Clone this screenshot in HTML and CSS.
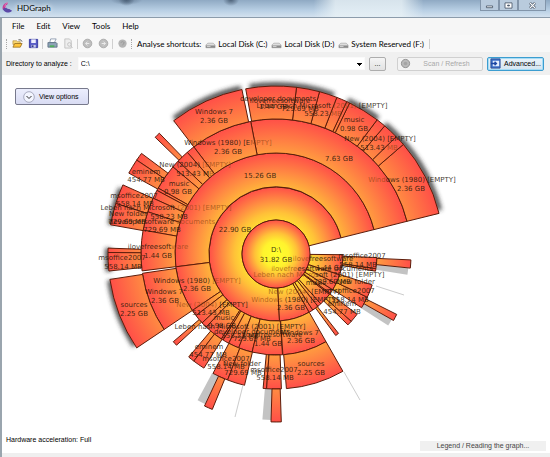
FILE: index.html
```html
<!DOCTYPE html>
<html lang="en">
<head>
<meta charset="utf-8">
<title>HDGraph</title>
<link rel="stylesheet" href="styles.css">
</head>
<body>
<div class="window">
  <header class="titlebar">
    <svg class="logo" viewBox="0 0 12 12" aria-hidden="true">
      <path d="M6 0A6 6 0 0 0 1 8L5 7A3 3 0 0 1 6 2Z" fill="#c43a94"/>
      <path d="M1 7a6 6 0 0 0 10 2L8 7A4 4 0 0 1 4 5Z" fill="#5b49a8"/>
      <path d="M6 0a4 4 0 0 0-2 6" stroke="#e584bd" fill="none"/>
    </svg>
    <h1 class="title">HDGraph</h1>
    <div class="controls">
      <button class="control" aria-label="Minimize"><svg viewBox="0 0 10 8"><path d="M1.500 4.500h7v2h-7z" fill="#fff" stroke="#4d5a6b"/></svg></button>
      <button class="control" aria-label="Maximize"><svg viewBox="0 0 10 8"><path d="M1 1h8v6H1z" fill="#fff" stroke="#4d5a6b"/><path d="M4 3.500h2v1H4z" fill="#4d5a6b" stroke="#4d5a6b"/></svg></button>
      <button class="control close" aria-label="Close"><svg viewBox="0 0 10 8"><path d="M2 1l6 6M8 1L2 7" stroke="#4d5a6b" stroke-width="3"/><path d="M2 1l6 6M8 1L2 7" stroke="#fff" stroke-width="1.400"/></svg></button>
    </div>
  </header>
  <div class="client">
    <nav class="menu">
      <a href="#">File</a><a href="#">Edit</a><a href="#">View</a><a href="#">Tools</a><a href="#">Help</a>
    </nav>
    <div class="toolbar">
      <span class="grip"></span>
      <button class="tool" aria-label="Open"><svg viewBox="0 0 12 12"><path d="M1 3h4l1 1h3v3H1z" fill="#f7d774" stroke="#a87b22" stroke-width=".6"/><path d="M1 10l2-4h8l-2 4z" fill="#ffc53a" stroke="#8d6418" stroke-width=".8"/><path d="M7 2q3-1 4 2" stroke="#555" fill="none"/></svg></button>
      <button class="tool" aria-label="Save"><svg viewBox="0 0 12 12"><path d="M1.500 1.500h9v9h-9z" fill="#5558c5" stroke="#3539a0"/><path d="M3.500 1.500h5v4h-5z" fill="#eef"/><path d="M3.500 7.500h5v3h-5z" fill="#c8cbea"/><path d="M4 8h2v2H4z" fill="#33388a"/></svg></button>
      <span class="sep"></span>
      <button class="tool" aria-label="Print"><svg viewBox="0 0 12 12"><path d="M4 1h6L8 5H3z" fill="#fff" stroke="#7688a0" stroke-width=".8"/><path d="M1 5h9l1 1v4H1z" fill="#8fa3b8" stroke="#526579" stroke-width=".8"/><path d="M3 8h5v2H3z" fill="#4fae5a"/></svg></button>
      <button class="tool" aria-label="Preview"><svg viewBox="0 0 12 12" fill="none" stroke="#c2c2c2"><path d="M2 1h5l2 2v8H2z" fill="#eee"/><circle cx="7" cy="7" r="2"/><path d="M8.500 8.500l2 2"/></svg></button>
      <span class="sep"></span>
      <button class="tool" aria-label="Back"><svg viewBox="0 0 12 12"><circle cx="6" cy="6" r="4.700" fill="#bebebe" stroke="#a9a9a9"/><path d="M8 6H4M6 4L4 6l2 2" stroke="#eee" fill="none"/></svg></button>
      <button class="tool" aria-label="Forward"><svg viewBox="0 0 12 12"><circle cx="6" cy="6" r="4.700" fill="#bebebe" stroke="#a9a9a9"/><path d="M4 6h4M6 4l2 2-2 2" stroke="#eee" fill="none"/></svg></button>
      <span class="sep"></span>
      <button class="tool" aria-label="Stop"><svg viewBox="0 0 12 12"><circle cx="6" cy="6" r="4.500" fill="#b4b4b4"/><path d="M4 5q2-2 4 0L6 8" stroke="#999" fill="none"/></svg></button>
      <span class="grip"></span>
      <span class="caption">Analyse shortcuts:</span>
      <button class="drive"><svg viewBox="0 0 12 8"><path d="M1 4l2-2h6l2 2v3H1z" fill="#dedede" stroke="#999" stroke-width=".6"/><path d="M1 4.500h10V7H1z" fill="#8b8b8b"/><path d="M2 5h4v1H2z" fill="#ddd"/></svg>Local Disk (C:)</button>
      <button class="drive"><svg viewBox="0 0 12 8"><path d="M1 4l2-2h6l2 2v3H1z" fill="#dedede" stroke="#999" stroke-width=".6"/><path d="M1 4.500h10V7H1z" fill="#8b8b8b"/><path d="M2 5h4v1H2z" fill="#ddd"/></svg>Local Disk (D:)</button>
      <button class="drive"><svg viewBox="0 0 12 8"><path d="M1 4l2-2h6l2 2v3H1z" fill="#dedede" stroke="#999" stroke-width=".6"/><path d="M1 4.500h10V7H1z" fill="#8b8b8b"/><path d="M2 5h4v1H2z" fill="#ddd"/></svg>System Reserved (F:)</button>
      <span class="sep"></span>
    </div>
    <form class="target">
      <label for="directory">Directory to analyze :</label>
      <select id="directory" class="directory"><option>C:\</option></select>
      <button type="button" class="push browse">...</button>
      <button type="button" class="push scan" disabled><svg viewBox="0 0 12 12"><circle cx="6" cy="6" r="4.500" fill="#b9b9b9" stroke="#8e8e8e"/><circle cx="6" cy="6" r="2" fill="#a4a4a4"/></svg><span>Scan / Refresh</span></button>
      <button type="button" class="push advanced"><svg viewBox="0 0 12 12"><path d="M1 1h10v10H1z" fill="#3c70c9" stroke="#2d4f96"/><path d="M3 3h7v6H3z" fill="#e4eeff"/><path d="M1 6h5M5 4l2 2-2 2" stroke="#1c47a4" fill="none" stroke-width="1.500"/></svg>Advanced...</button>
    </form>
    <main class="stage">
      <svg class="chart" id="chart" viewBox="2 75 548 378" preserveAspectRatio="xMidYMin meet" role="img"></svg>
      <button class="options"><svg viewBox="0 0 12 12" fill="none"><circle cx="6" cy="6" r="5.300" fill="#f3f5ff" stroke="#8c8fa6" stroke-width=".7"/><path d="M3.500 5L6 7.500 8.500 5" stroke="#333"/></svg>View options</button>
      <footer class="status">
        <span>Hardware acceleration: Full</span>
        <button class="legend">Legend / Reading the graph...</button>
      </footer>
    </main>
    <div class="edge"></div>
  </div>
</div>
<script src="chart.js"></script>
</body>
</html>
```
FILE: styles.css
```css
* { box-sizing: border-box; }
body { margin: 0; font-family: Lato, "Noto Sans", sans-serif; font-size: 8px; line-height: 12px; color: #000; background: #fff; }
button, select { font: inherit; color: inherit; margin: 0; padding: 0; border: 0; background: none; }
a { color: inherit; text-decoration: none; }
svg { display: block; flex: none; }
.window { min-height: 100vh; display: flex; flex-direction: column; }
.titlebar {
  height: 18px; display: flex; align-items: center; gap: 1px; padding: 0 0 2px 2px; border-bottom: 1px solid #8c9cab;
  background:
    radial-gradient(ellipse 16px 5px at 23% 0, #44597188, transparent),
    radial-gradient(ellipse 8px 6px at 23% 0, #2d3f5599, transparent),
    radial-gradient(ellipse 8px 6px at 42% 0, #2d3f55aa, transparent),
    linear-gradient(90deg, transparent 57%, #e9f2f6cc 61%, #e9f2f6cc 73%, transparent 77%),
    linear-gradient(#8fa9c3, #b8cfe4 60%, #d3e1ee);
}
.logo { width: 11px; height: 12px; }
.title { margin: 0; padding: 0 3px; font-size: 8px; font-weight: 400; flex: 1; color: #000; text-shadow: 0 0 4px #fff, 0 0 6px #fff; }
.controls { display: flex; align-self: flex-start; padding-right: 4px; }
.control { width: 19px; height: 11px; display: grid; place-items: center; border: 1px solid #8295aa; border-top: 0; background: #b9cbdd; }
.control.close { width: 28px; }
.control svg { width: 9px; height: 7px; }
.client { flex: 1; display: flex; flex-direction: column; border-left: 2px solid #9aa5ae; }
.menu { display: flex; gap: 12px; padding: 2px 10px; height: 17px; background: #f6f6f6; }
.toolbar { display: flex; align-items: center; height: 17px; padding: 0 3px; background: #f8f8f8; }
.grip { width: 2px; height: 10px; margin: 0 1px; border-left: 1px dotted #a8a8a8; }
.sep { width: 1px; height: 10px; margin: 0 1px; background: #d0d0d0; }
.tool { width: 16px; display: grid; place-items: center; }
.tool svg { width: 11px; height: 11px; }
.caption { margin: 0 4px 0 3px; }
.drive { display: flex; align-items: center; gap: 2px; margin-right: 4px; white-space: nowrap; }
.drive svg { width: 11px; height: 8px; margin-top: 3px; }
.target { display: flex; align-items: center; height: 23px; gap: 4px; padding: 0 6px 0 4px; background: #f0f0f0; font-family: "Liberation Sans", sans-serif; font-size: 7px; }
.directory {
  flex: 1; min-width: 40px; height: 13px; margin-left: 2px; padding: 0 2px; appearance: none; line-height: 12px; background: #fff;
  background-image: linear-gradient(#000, #000), linear-gradient(#000, #000), linear-gradient(#000, #000);
  background-size: 5px 1px, 3px 1px, 1px 1px; background-position: right 2px top 5px, right 3px top 6px, right 4px top 7px; background-repeat: no-repeat;
  border: 1px solid #fafafa;
}
.push { height: 14px; display: flex; align-items: center; justify-content: center; border: 1px solid #adadad; border-radius: 2px; background: linear-gradient(#f5f5f5, #e2e2e2); }
.push svg { width: 11px; height: 11px; }
.browse { width: 17px; }
.scan { width: 86px; margin-left: 7px; padding-left: 2px; border-color: #d0d0d0; background: #f3f3f3; color: #a8a8a8; }
.scan span { flex: 1; text-align: center; }
.advanced { width: 57px; gap: 3px; border-color: #3c9dd0; background: linear-gradient(#eaf3fa, #d5e5f0); box-shadow: inset 0 0 0 1px #a6dcf5; }
.stage { flex: 1; display: grid; background: #fff; font-family: "Liberation Sans", sans-serif; font-size: 7px; }
.stage > * { grid-area: 1 / 1; }
.chart { width: 100%; height: auto; font-family: "DejaVu Sans", sans-serif; }
.options { align-self: start; justify-self: start; width: 74px; height: 17px; margin: 13px; display: flex; align-items: center; gap: 4px; padding: 0 7px; border: 1px solid #77798c; border-radius: 2px; background: linear-gradient(#eceefd, #d9dcf3); white-space: nowrap; }
.options svg { width: 12px; height: 12px; }
.status { align-self: end; display: flex; justify-content: space-between; padding: 0 4px 2px; }
.status span { padding-bottom: 5px; }
.legend { align-self: end; width: 126px; height: 10px; line-height: 10px; background: #f0f0f0; color: #444; }
.edge { height: 4px; background: #efefef; }
.sector { stroke: #5c1c0a; stroke-width: 1; stroke-linejoin: round; }
.shade { fill: none; stroke: #333; stroke-opacity: .85; stroke-width: 6; }
.cast { fill: #888; opacity: .5; }
.ray { stroke: #ccc; stroke-width: 1; }
.label { font-size: 7px; text-anchor: middle; fill: #26170a; fill-opacity: .88; }
.dim { fill: #8a4310; fill-opacity: .65; }
```
FILE: chart.js
```js
const svg = document.getElementById("chart");
const NS = "http://www.w3.org/2000/svg";
const CX = 276, CY = 254;
const R = [34, 67, 101, 135, 168];

function add(parent, tag, attrs) {
  const node = document.createElementNS(NS, tag);
  for (const key in attrs) node.setAttribute(key, attrs[key]);
  parent.appendChild(node);
  return node;
}
function point(r, deg) {
  const a = deg * Math.PI / 180;
  return (CX + r * Math.cos(a)).toFixed(1) + " " + (CY + r * Math.sin(a)).toFixed(1);
}
function wedge(r0, r1, from, to) {
  const big = to - from > 180 ? 1 : 0;
  return `M${point(r0, from)}L${point(r1, from)}A${r1} ${r1} 0 ${big} 1 ${point(r1, to)}L${point(r0, to)}A${r0} ${r0} 0 ${big} 0 ${point(r0, from)}Z`;
}

// One gradient per ring, all centred on the root disc.
const defs = add(svg, "defs", {});
R.forEach((r, i) => {
  const g = add(defs, "radialGradient", { id: "ring" + i, gradientUnits: "userSpaceOnUse", cx: CX, cy: CY, r });
  [[0, "#ffff2c"], [.38, "#fff32e"], [.62, "#ffc238"], [.8, "#ff8c42"], [1, "#ff4f48"]]
    .forEach(([offset, color]) => add(g, "stop", { offset, "stop-color": color }));
});
const blur = add(defs, "filter", { id: "blur", x: "-20%", y: "-20%", width: "140%", height: "140%" });
add(blur, "feGaussianBlur", { stdDeviation: 2 });

const shadows = add(svg, "g", { filter: "url(#blur)" });
const casts = add(svg, "g", {});
const sectors = add(svg, "g", {});

function sector(ring, from, to) {
  add(sectors, "path", { class: "sector", d: wedge(R[ring - 1], R[ring], from, to), fill: `url(#ring${ring})` });
}
function shade(r, from, to) {
  add(shadows, "path", { class: "shade", d: `M${point(r, from)}A${r} ${r} 0 0 1 ${point(r, to)}` });
}

shade(169, -127, -102); shade(169, -99, -70); shade(169, -65, -53); shade(169, -50, -15);
shade(168, -170, -157); shade(168, 174, 182); shade(168, 147, 171);

sector(1, 87, 346); sector(2, 172.7, 346); sector(3, 259.2, 346);

// Folder boundaries, in degrees counter-clockwise from the start of each copy.
const cuts = [0, 26.7, 30.3, 35.7, 39, 50, 51.1, 54.8, 61, 69, 86.4];
const children = [[.9, 26.7], [33.2, 35.2], [42.4, 45.2], [45.2, 50.4], [54.9, 61.7], [61.7, 69.2], [77.2, 78.7], [78.7, 85]];
[[4, 346], [3, 259.2], [2, 172.7], [1, 87]].forEach(([ring, start]) => {
  for (let i = 1; i < cuts.length; i++) sector(ring, start - cuts[i], start - cuts[i - 1]);
  if (ring < 4) children.forEach(([a, b]) => sector(ring + 1, start - b, start - a));
  if (ring < 3) {
    [[1.4, 26.7], [57.5, 60.4], [81, 84.5]].forEach(([a, b], i) => {
      sector(ring + 2, start - b, start - a);
      if (i) add(casts, "path", { class: "cast", d: wedge(R[ring + 1], R[ring + 2] - 2, start - a, start - a + 3) });
    });
  }
});
[[243, 385, 235, 417], [344, 372, 360, 400], [376, 286, 404, 295]]
  .forEach(([x1, y1, x2, y2]) => add(svg, "line", { class: "ray", x1, y1, x2, y2 }));
add(sectors, "circle", { class: "sector", cx: CX, cy: CY, r: R[0], fill: "url(#ring0)" });

// Text between tildes is drawn dimmed.
const labels = [
  ["D:\\", 276, 252], ["31.82 GB", 276, 262], ["22.90 GB", 235, 232], ["15.26 GB", 260, 178], ["7.63 GB", 339, 161],
  ["Windows 7", 214, 114], ["2.36 GB", 214, 123], ["Windows (1980) [E~MPTY]", 228, 145], ["2.36 GB", 228, 154],
  ["~Wind~ows (1980) [EMPTY]", 412, 182], ["2.36 GB", 411, 191], ["music", 354, 122], ["0.98 GB", 354, 131],
  ["New (2004) [EMPTY]", 380, 141], ["513.43 ~MB", 379, 150], ["Leben nach Microsoft~ (2001)~ [EMPTY]", 322, 108], ["558.23 ~MB", 323, 116],
  ["ilovefreesoftware", 280, 103], ["developer documents", 278, 101], ["1.44 GB", 273, 109], ["729.69 MB", 300, 111],
  ["New (2004)~ [EMPTY]", 195, 167], ["513.43 M~B", 195, 176], ["eminem", 146, 174], ["454.77 MB", 146, 182],
  ["music", 179, 186], ["0.98 GB", 178, 194], ["msoffice2007", 134, 198], ["558.14 MB", 135, 206],
  ["Leben nach Microsoft~ (2001) [EMPTY]", 166, 210], ["558.23 MB", 169, 219], ["New folder", 128, 216], ["729.69 MB", 127, 224],
  ["developersoftware~ documents", 162, 224], ["729.69 MB", 162, 232], ["ilovefreesoft~ware", 158, 249], ["1.44 GB", 158, 258],
  ["msoffice2007", 122, 260], ["558.14 MB", 123, 269], ["Windows (1980)~ [EMPTY]", 197, 283], ["2.36 GB", 197, 291],
  ["Windows 7", 164, 294], ["2.36 GB", 165, 303], ["sources", 134, 307], ["2.25 GB", 134, 316],
  ["~New (2004)~ [EMPTY]", 212, 307], ["513.43 MB", 211, 315], ["music", 224, 320], ["0.98 GB", 222, 328],
  ["Leben nach Microsoft (2001) [EMPTY]", 240, 329], ["558.23 MB", 240, 338], ["ilovefreesoftware", 272, 337], ["developer documents", 252, 334], ["729.69 MB", 252, 341], ["1.44 GB", 268, 346],
  ["Windows 7", 300, 335], ["2.36 GB", 301, 343], ["sources", 311, 366], ["2.25 GB", 311, 375],
  ["eminem", 209, 349], ["454.77 MB", 208, 357], ["msoffice2007", 226, 361], ["558.14 MB", 226, 369], ["New folder", 242, 366], ["729.69 MB", 243, 375],
  ["msoffice2007", 274, 372], ["558.14 MB", 275, 380],
  ["~ilove~freesoftware", 323, 261], ["msoffice2007", 362, 258], ["1.44 GB", 330, 270], ["558.14 MB", 358, 267],
  ["~ilovefre~esoftware documents", 322, 271], ["~Leben nach Micro~soft (2001) [EMPTY]", 319, 277], ["New folder", 356, 284], ["music", 316, 285], ["729.69 MB", 332, 284],
  ["msoffice2007", 351, 293], ["558.14 MB", 350, 302], ["~New (2004)~ [EMPTY]", 304, 294], ["~Windows~ (1980) [EMPTY]", 295, 302], ["2.36 GB", 291, 310],
  ["eminem", 342, 306], ["454.77 MB", 342, 314]
];
labels.forEach(([text, x, y]) => {
  const node = add(svg, "text", { class: "label", x, y });
  text.split("~").forEach((part, i) => {
    if (part) add(node, "tspan", i % 2 ? { class: "dim" } : {}).textContent = part;
  });
});
```
